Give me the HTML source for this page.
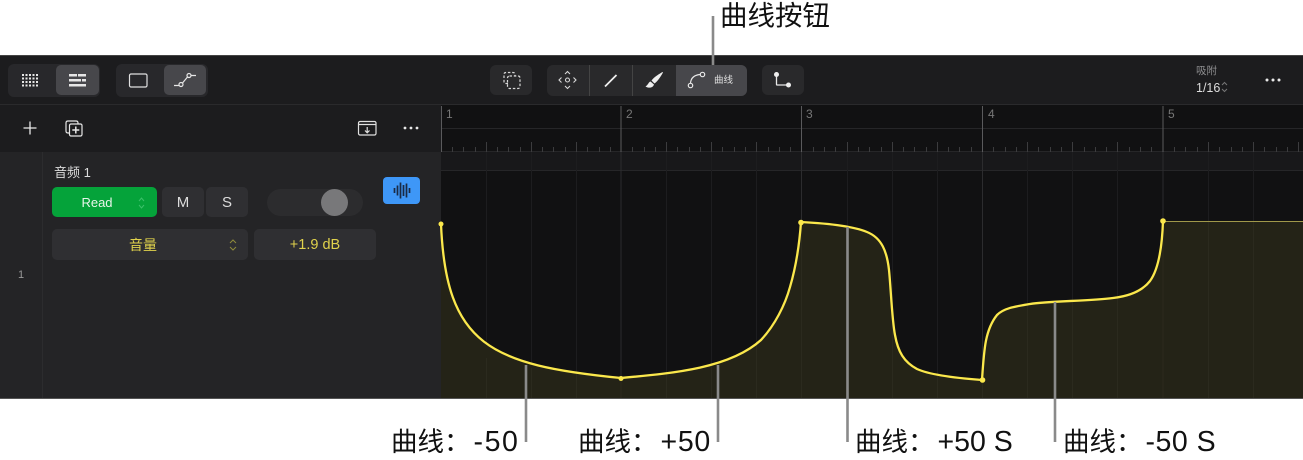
<!DOCTYPE html>
<html lang="zh"><head><meta charset="utf-8">
<style>
html,body{margin:0;padding:0;background:#fff}
#p{position:relative;width:1303px;height:460px;overflow:hidden;background:#fff;font-family:"Liberation Sans","Noto Sans CJK SC",sans-serif}
#p div{position:absolute;box-sizing:border-box}
.t{white-space:nowrap;line-height:1}
.lb{font-size:26.5px;color:#111;white-space:nowrap;line-height:1}
.lb span{font-size:28.5px;margin-left:3px}
.ctr{display:flex;align-items:center;justify-content:center}
svg{position:absolute;left:0;top:0}
</style></head><body><div id="p">
<div style="left:0;top:55px;width:1303px;height:344px;background:#1c1c1e;border-top:1px solid #444"></div>
<div style="left:0;top:104px;width:1303px;height:1px;background:#2a2a2c"></div>
<div style="left:0;top:152px;width:441px;height:246px;background:#242426"></div>
<div style="left:42px;top:152px;width:1px;height:246px;background:#2c2c2e"></div>
<div style="left:441px;top:105px;width:862px;height:293px;background:#111112"></div>
<div style="left:441px;top:152px;width:862px;height:18px;background:#18181a"></div>
<div style="left:0;top:398px;width:1303px;height:1px;background:#555"></div>

<!-- toolbar buttons -->
<div style="left:8px;top:64px;width:92px;height:33px;background:#28282b;border-radius:6px"></div>
<div style="left:56px;top:65px;width:43px;height:30px;background:#47474b;border-radius:5px"></div>
<div style="left:116px;top:64px;width:92px;height:33px;background:#28282b;border-radius:6px"></div>
<div style="left:164px;top:65px;width:42px;height:30px;background:#47474b;border-radius:5px"></div>
<div style="left:490px;top:65px;width:42px;height:30px;background:#29292b;border-radius:6px"></div>
<div style="left:547px;top:65px;width:200px;height:31px;background:#29292b;border-radius:6px"></div>
<div style="left:676px;top:65px;width:71px;height:31px;background:#47474b;border-radius:0 6px 6px 0"></div>
<div style="left:589px;top:65px;width:1px;height:31px;background:#444"></div>
<div style="left:632px;top:65px;width:1px;height:31px;background:#444"></div>
<div style="left:762px;top:65px;width:42px;height:30px;background:#29292b;border-radius:6px"></div>

<!-- track controls -->
<div class="t" style="left:54px;top:166px;font-size:13px;color:#ddd">音频 1</div>
<div class="ctr" style="left:52px;top:187px;width:105px;height:30px;background:#05a33a;border-radius:5px;color:#e8f5ea;font-size:13px;padding-right:15px">Read</div>
<div class="ctr" style="left:162px;top:187px;width:42px;height:30px;background:#2f2f32;border-radius:5px;color:#ddd;font-size:15px">M</div>
<div class="ctr" style="left:206px;top:187px;width:42px;height:30px;background:#2f2f32;border-radius:5px;color:#ddd;font-size:15px">S</div>
<div style="left:267px;top:189px;width:96px;height:27px;background:#2c2c2e;border-radius:14px"></div>
<div style="left:321px;top:189px;width:27px;height:27px;background:#78787a;border-radius:50%"></div>
<div style="left:383px;top:177px;width:37px;height:27px;background:#3e97f7;border-radius:4px"></div>
<div class="ctr" style="left:52px;top:229px;width:196px;height:31px;background:#2f2f32;border-radius:5px;color:#e0d24c;font-size:14px;padding-right:14px">音量</div>
<div class="ctr" style="left:254px;top:229px;width:122px;height:31px;background:#2f2f32;border-radius:5px;color:#e0d24c;font-size:14.5px">+1.9 dB</div>
<div class="t" style="left:18px;top:270px;font-size:11px;color:#999">1</div>

<!-- small toolbar text -->
<div class="t" style="left:714px;top:76px;font-size:9.5px;color:#ddd">曲线</div>
<div class="t" style="left:1196px;top:66px;font-size:10.5px;color:#8e8e90">吸附</div>
<div class="t" style="left:1196px;top:82px;font-size:12.5px;color:#ddd">1/16</div>

<!-- bar numbers -->
<div class="t" style="left:446px;top:108px;font-size:12px;color:#777">1</div>
<div class="t" style="left:626px;top:108px;font-size:12px;color:#777">2</div>
<div class="t" style="left:806px;top:108px;font-size:12px;color:#777">3</div>
<div class="t" style="left:988px;top:108px;font-size:12px;color:#777">4</div>
<div class="t" style="left:1168px;top:108px;font-size:12px;color:#777">5</div>

<svg width="1303" height="460" viewBox="0 0 1303 460" fill="none">
<!-- grid -->
<g stroke="#262628" stroke-width="1">
<path d="M441 128.500H1303M441 151.500H1303M441 170.500H1303"/>
</g>
<g stroke="#1d1d1f" stroke-width="1">
<path d="M486.500 152V398M531.500 152V398M576.500 152V398M666.500 152V398M711.500 152V398M756.500 152V398M847.500 152V398M892.500 152V398M937.500 152V398M1027.500 152V398M1072.500 152V398M1117.500 152V398M1208.500 152V398M1253.500 152V398"/>
</g>
<g stroke="#2c2c2e" stroke-width="1">
<path d="M621 152V398M801.500 152V398M982.500 152V398M1163 152V398"/>
</g>
<g stroke="#3c3c3e" stroke-width="1">
<path d="M486.500 142V152M531.500 142V152M576.500 142V152M666.500 142V152M711.500 142V152M756.500 142V152M847.500 142V152M892.500 142V152M937.500 142V152M1027.500 142V152M1072.500 142V152M1117.500 142V152M1208.500 142V152M1253.500 142V152M1298.500 142V152"/>
<path d="M452.500 147V152M463.500 147V152M475.500 147V152M497.500 147V152M508.500 147V152M520.500 147V152M542.500 147V152M553.500 147V152M565.500 147V152M587.500 147V152M599.500 147V152M610.500 147V152M632.500 147V152M644.500 147V152M655.500 147V152M677.500 147V152M689.500 147V152M700.500 147V152M722.500 147V152M734.500 147V152M745.500 147V152M768.500 147V152M779.500 147V152M790.500 147V152M813.500 147V152M824.500 147V152M835.500 147V152M858.500 147V152M869.500 147V152M881.500 147V152M903.500 147V152M914.500 147V152M926.500 147V152M948.500 147V152M959.500 147V152M971.500 147V152M993.500 147V152M1005.500 147V152M1016.500 147V152M1038.500 147V152M1050.500 147V152M1061.500 147V152M1084.500 147V152M1095.500 147V152M1106.500 147V152M1129.500 147V152M1140.500 147V152M1151.500 147V152M1174.500 147V152M1185.500 147V152M1197.500 147V152M1219.500 147V152M1231.500 147V152M1242.500 147V152M1264.500 147V152M1276.500 147V152M1287.500 147V152"/>
</g>
<g stroke="#5a5a5c" stroke-width="1">
<path d="M441.500 106V152M621 106V152M801.500 106V152M982.500 106V152M1163 106V152"/>
</g>
<!-- automation fill + curve -->
<path d="M441 224C446 345 490 365 621 378C675 373 730 368 761 340C775 325 785 305 790 287C795 270 799 250 801 222C830 223.500 855 227 867 232C882 238 887 252 889 270C891 290 892 320 895 335C898 352 904 362 917 369C930 375 955 378 982 380C984 350 985 330 997 315C1004 308 1015 306.500 1030 304C1050 301 1090 301 1113 298C1130 296 1143 290 1150 281C1158 270 1162 250 1163 221H1303V398H441Z" fill="#242317"/>
<g stroke="#2b2a1e"><path d="M486.500 358V398M531.500 368V398M576.500 374V398M666.500 374V398M711.500 366V398M756.500 344V398M847.500 228V398M892.500 310V398M937.500 376V398M1027.500 305V398M1072.500 301V398M1117.500 298V398M1208.500 222V398M1253.500 222V398M621 378V398M801.500 222V398M982.500 380V398M1163 221V398"/></g>
<path d="M1163 221.500H1303" stroke="#a0984a" stroke-width="1"/>
<path d="M441 224C446 345 490 365 621 378C675 373 730 368 761 340C775 325 785 305 790 287C795 270 799 250 801 222C830 223.500 855 227 867 232C882 238 887 252 889 270C891 290 892 320 895 335C898 352 904 362 917 369C930 375 955 378 982 380C984 350 985 330 997 315C1004 308 1015 306.500 1030 304C1050 301 1090 301 1113 298C1130 296 1143 290 1150 281C1158 270 1162 250 1163 221" stroke="#fbe84c" stroke-width="2.300"/>
<g fill="#fbe84c"><circle cx="441" cy="224" r="2.500"/><circle cx="621" cy="378.500" r="2.500"/><circle cx="801" cy="222.500" r="2.800"/><circle cx="982.500" cy="380" r="2.800"/><circle cx="1163" cy="221" r="2.800"/></g>

<!-- leaders -->
<g stroke="#8a8a8a" stroke-width="2.600">
<path d="M713 16V65M526 365V442M718 365V442M847.500 227V442M1055 302V442"/>
</g>

<!-- icon: grid -->
<g fill="#e6e6e6"><path d="M22 74h2v2h-2zM25.500 74h2v2h-2zM29 74h2v2h-2zM32.500 74h2v2h-2zM36 74h2v2h-2zM22 77.500h2v2h-2zM25.500 77.500h2v2h-2zM29 77.500h2v2h-2zM32.500 77.500h2v2h-2zM36 77.500h2v2h-2zM22 81h2v2h-2zM25.500 81h2v2h-2zM29 81h2v2h-2zM32.500 81h2v2h-2zM36 81h2v2h-2zM22 84.500h2v2h-2zM25.500 84.500h2v2h-2zM29 84.500h2v2h-2zM32.500 84.500h2v2h-2zM36 84.500h2v2h-2z"/>
<path d="M69 74h8v2.500h-8zM78 74h8v2.500h-8zM69 79h12v2.500h-12zM82 79h4v2.500h-4zM69 84h17v2.500h-17z"/></g>
<rect x="129.500" y="74" width="17.500" height="13" rx="1.500" stroke="#e0e0e0" stroke-width="1.200"/>
<!-- automation icon -->
<g stroke="#e6e6e6" stroke-width="1.200"><circle cx="181" cy="84.500" r="2"/><circle cx="189" cy="75.500" r="2"/><path d="M174 85.500H179M182.500 83L187.500 77M191 75.500H196"/></g>

<!-- + and dup -->
<path d="M30 121.500V134.500M23.500 128H36.500" stroke="#e8e8e8" stroke-width="1.300"/>
<g stroke="#e6e6e6" stroke-width="1.200"><path d="M69 133H68Q66 133 66 131V123Q66 121 68 121H76Q78 121 78 123V124"/><rect x="69.500" y="124" width="12.500" height="12" rx="1.500"/><path d="M75.800 126.500V133.500M72.300 130H79.300" stroke-width="1.500"/></g>
<!-- download box -->
<g stroke="#e0e0e0" stroke-width="1.200"><rect x="358.500" y="121.500" width="17.500" height="13.500" rx="1.500"/><path d="M359 124.500H375.500M367.200 127V132.500M365 130.500L367.200 132.800L369.500 130.500"/></g>
<g fill="#e8e8e8"><circle cx="405" cy="128" r="1.400"/><circle cx="411" cy="128" r="1.400"/><circle cx="417" cy="128" r="1.400"/><circle cx="1267" cy="80" r="1.500"/><circle cx="1273" cy="80" r="1.500"/><circle cx="1279" cy="80" r="1.500"/></g>

<!-- dashed marquee icon -->
<g stroke="#d8d8d8" stroke-width="1.200"><path d="M508 83.500H506Q504 83.500 504 81.500V74.500Q504 72.500 506 72.500H513Q515 72.500 515 74.500V75.500" stroke-dasharray="2.500 1.800"/><rect x="507.500" y="76" width="12.500" height="12.500" rx="2" stroke-dasharray="2.500 1.800"/></g>
<!-- move icon -->
<g stroke="#d8d8d8" stroke-width="1.100"><circle cx="567.500" cy="80" r="2"/><path d="M565 74L567.500 71.500L570 74M565 86L567.500 88.500L570 86M561.500 77.500L559 80L561.500 82.500M573.500 77.500L576 80L573.500 82.500"/></g>
<!-- pencil -->
<path d="M605 86.500L616.500 75" stroke="#eee" stroke-width="1.800"/>
<!-- brush -->
<path d="M662.500 72C660 73.500 654 77 651.500 80.500L654.500 83.500C658 81 661 76 663 72.500Z" fill="#eee"/><path d="M650.500 81.500C648.500 82 648.500 84.500 645.500 86.500C648.500 88.500 653 88 654 84.500Z" fill="#eee"/>
<!-- curve icon -->
<g stroke="#e8e8e8" stroke-width="1.200"><circle cx="690.500" cy="85.500" r="2.200"/><circle cx="702.500" cy="74.500" r="2.200"/><path d="M690.500 83C691 78 694 75 700.300 74.500"/></g>
<!-- step icon -->
<path d="M776.500 74.500V84.500Q776.500 85 777 85H788" stroke="#e8e8e8" stroke-width="1.300"/><circle cx="776.500" cy="74.500" r="2.500" fill="#eee"/><circle cx="788.500" cy="85" r="2.500" fill="#eee"/>

<!-- steppers -->
<path d="M139 201L141.500 198L144 201M139 205L141.500 208L144 205" stroke="#3cc06a" stroke-width="1"/>
<path d="M230 243L233 240L236 243M230 247L233 250L236 247" stroke="#8f8a3c" stroke-width="1"/>
<path d="M1222 85L1224.500 82.500L1227 85M1222 89L1224.500 91.500L1227 89" stroke="#777" stroke-width="1"/>
<!-- waveform -->
<path d="M394.500 188V193M397.500 185.500V195.500M400.500 182.500V198.500M403.500 185V196M406.500 183.500V197.500M409.500 188V193" stroke="#1a2b45" stroke-width="1.700"/>
</svg>

<!-- labels -->
<div class="lb" style="left:720px;top:1.500px;font-size:27.500px">曲线按钮</div>
<div class="lb" style="left:391px;top:428px">曲线：<span style="letter-spacing:1.600px">-50</span></div>
<div class="lb" style="left:578px;top:428px">曲线：<span style="letter-spacing:.7px">+50</span></div>
<div class="lb" style="left:855px;top:428px">曲线：<span>+50 S</span></div>
<div class="lb" style="left:1063px;top:428px">曲线：<span style="letter-spacing:.5px">-50 S</span></div>
</div></body></html>
